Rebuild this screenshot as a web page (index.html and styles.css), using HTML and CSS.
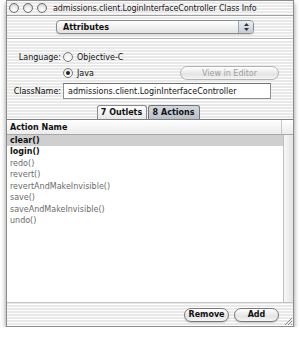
FILE: index.html
```html
<!DOCTYPE html>
<html lang="en">
  <head>
    <meta charset="UTF-8" />
    <title>Class Info</title>
    <link rel="stylesheet" href="styles.css">
  </head>
  <body>
    <div class="window">
      <div class="titlebar">
        <div class="lights">
          <span class="light"></span>
          <span class="light"></span>
          <span class="light"></span>
        </div>
        <div class="title">admissions.client.LoginInterfaceController Class Info</div>
      </div>

      <div class="popup-row">
        <div class="popup">
          <span class="popup-text">Attributes</span>
          <span class="stepper">
            <svg width="5" height="8" viewBox="0 0 5 8">
              <path d="M2.5 0 L5 3 L0 3 Z M0 5 L5 5 L2.5 8 Z" fill="#333" />
            </svg>
          </span>
        </div>
      </div>
      <div class="separator"></div>

      <div class="form">
        <div class="label">Language:</div>
        <div class="radio"><span class="radio-dot"></span>Objective-C</div>

        <div></div>
        <div class="radio-line">
          <div class="radio"><span class="radio-dot on"></span>Java</div>
          <div class="capsule disabled">View in Editor</div>
        </div>

        <div class="label">ClassName:</div>
        <div class="field">admissions.client.LoginInterfaceController</div>
      </div>

      <div class="tabs">
        <div class="tab">7 Outlets</div>
        <div class="tab active">8 Actions</div>
      </div>

      <div class="pane">
        <div class="table">
          <div class="table-head">
            <div class="col">Action Name</div>
            <div class="corner"></div>
          </div>
          <div class="table-body">
            <div class="rows">
              <div class="row selected bold">clear()</div>
              <div class="row bold">login()</div>
              <div class="row">redo()</div>
              <div class="row">revert()</div>
              <div class="row">revertAndMakeInvisible()</div>
              <div class="row">save()</div>
              <div class="row">saveAndMakeInvisible()</div>
              <div class="row">undo()</div>
            </div>
            <div class="scroll"></div>
          </div>
        </div>
        <div class="actions">
          <div class="capsule">Remove</div>
          <div class="capsule">Add</div>
        </div>
      </div>

      <svg class="grip" width="9" height="9" viewBox="0 0 9 9">
        <path d="M8 1 L1 8 M8 4 L4 8 M8 7 L7 8" stroke="#888" stroke-width="1" />
      </svg>
    </div>
  </body>
</html>
```

FILE: styles.css
```css
body,
html {
  margin: 0;
  padding: 0;
  background: #fff;
  font-family: "DejaVu Sans", sans-serif;
  font-size: 8px;
  color: #111;
}

.window {
  position: relative;
  margin-left: 6px;
  width: 288px;
  height: 327px;
  box-sizing: border-box;
  border: 1px solid #8c8c8c;
  box-shadow: 0 3px 5px rgba(0, 0, 0, 0.45);
  display: flex;
  flex-direction: column;
  background: repeating-linear-gradient(to bottom, #fdfdfd 0 1.5px, #e9e9e9 1.5px 3px);
}

/* Title bar */
.titlebar {
  height: 14px;
  border-bottom: 1px solid #a0a0a0;
  display: flex;
  align-items: center;
}

.lights {
  display: flex;
  gap: 4px;
  padding-left: 2px;
}

.light {
  width: 10px;
  height: 10px;
  box-sizing: border-box;
  border-radius: 50%;
  border: 1px solid #6e6e6e;
  background: radial-gradient(circle at 50% 70%, #fff 0, #e6e6e6 55%, #b8b8b8 100%);
}

.title {
  flex: 1;
  padding-left: 6px;
  letter-spacing: -0.12px;
  white-space: nowrap;
  color: #222;
}

/* Popup */
.popup-row {
  padding: 4px 0 4px 0;
  display: flex;
  justify-content: center;
}

.popup {
  width: 196px;
  height: 12px;
  margin-left: 10px;
  border: 1px solid #8a8a8a;
  border-radius: 4px;
  background: linear-gradient(#ffffff, #e2e2e2);
  display: flex;
  align-items: center;
  box-shadow: 0 1px 1px rgba(0, 0, 0, 0.15);
}

.popup-text {
  flex: 1;
  font-weight: bold;
  padding-left: 6px;
}

.stepper {
  width: 14px;
  height: 12px;
  display: flex;
  align-items: center;
  justify-content: center;
  border-left: 1px solid #9ba6b3;
  border-radius: 0 3px 3px 0;
  background: linear-gradient(#e9eef5, #c4ccd6);
}

.separator {
  height: 0;
  border-top: 1px solid #b4b4b4;
  border-bottom: 1px solid #fff;
}

/* Form */
.form {
  display: grid;
  grid-template-columns: 54px 1fr;
  grid-template-rows: 12px 16px 16px;
  column-gap: 2px;
  row-gap: 2px;
  padding: 11px 0 6px 0;
  align-items: center;
}

.label {
  text-align: right;
}

.radio {
  display: flex;
  align-items: center;
  gap: 4px;
}

.radio-dot {
  width: 10px;
  height: 10px;
  box-sizing: border-box;
  border-radius: 50%;
  border: 1px solid #7a7a7a;
  background: radial-gradient(circle at 50% 70%, #fff 0, #ececec 70%, #cfcfcf 100%);
  display: flex;
  align-items: center;
  justify-content: center;
}

.radio-dot.on::after {
  content: "";
  width: 4px;
  height: 4px;
  border-radius: 50%;
  background: #222;
}

.radio-line {
  display: flex;
  align-items: center;
  justify-content: space-between;
  padding-right: 14px;
}

.capsule {
  height: 12px;
  border: 1px solid #7a7a7a;
  border-radius: 7px;
  background: linear-gradient(#ffffff, #e4e4e4 60%, #f4f4f4);
  display: flex;
  align-items: center;
  justify-content: center;
  font-weight: bold;
  box-shadow: 0 1px 1px rgba(0, 0, 0, 0.2);
}

.capsule.disabled {
  width: 97px;
  border-color: #b4b4b4;
  color: #a0a0a0;
  font-weight: normal;
  box-shadow: none;
}

.field {
  height: 14px;
  margin-right: 22px;
  border: 1px solid #8e8e8e;
  border-top-color: #6e6e6e;
  background: #fff;
  display: flex;
  align-items: center;
  padding-left: 4px;
}

/* Tabs */
.tabs {
  display: flex;
  justify-content: center;
  height: 14px;
  padding-right: 4px;
}

.tab {
  width: 50px;
  box-sizing: border-box;
  border: 1px solid #8a8a8a;
  border-bottom: none;
  border-radius: 3px 3px 0 0;
  background: linear-gradient(#ffffff, #e6e6e6);
  display: flex;
  align-items: center;
  justify-content: center;
  font-weight: bold;
}

.tab.active {
  width: 52px;
  margin-left: 1px;
  border-color: #6f7780;
  background: linear-gradient(#d4d8de, #b9bfc7);
}

/* Pane */
.pane {
  flex: 1;
  display: flex;
  flex-direction: column;
  border-top: 1px solid #7f7f7f;
}

.table {
  flex: 1;
  display: flex;
  flex-direction: column;
  background: #fff;
  border-bottom: 1px solid #c4c4c4;
}

.table-head {
  height: 14px;
  display: flex;
  border-bottom: 1px solid #a8a8a8;
  background: linear-gradient(#ffffff, #ececec);
}

.col {
  flex: 1;
  font-weight: bold;
  padding-left: 3px;
  display: flex;
  align-items: center;
  border-right: 1px solid #c8c8c8;
}

.corner {
  width: 11px;
}

.table-body {
  flex: 1;
  display: flex;
}

.rows {
  flex: 1;
}

.row {
  height: 11.43px;
  line-height: 11.43px;
  padding-left: 3px;
  color: #6a6a6a;
}

.row.bold {
  font-weight: bold;
  color: #111;
}

.row.selected {
  background: #cfcfcf;
}

.scroll {
  width: 9px;
  border-left: 1px solid #c0c0c0;
  background: linear-gradient(to right, #f7f7f7, #e4e4e4);
}

.actions {
  height: 23px;
  display: flex;
  justify-content: flex-end;
  align-items: center;
  gap: 5px;
  padding-right: 14px;
}

.actions .capsule {
  width: 43px;
}

.grip {
  position: absolute;
  right: 0;
  bottom: 0;
}
```
